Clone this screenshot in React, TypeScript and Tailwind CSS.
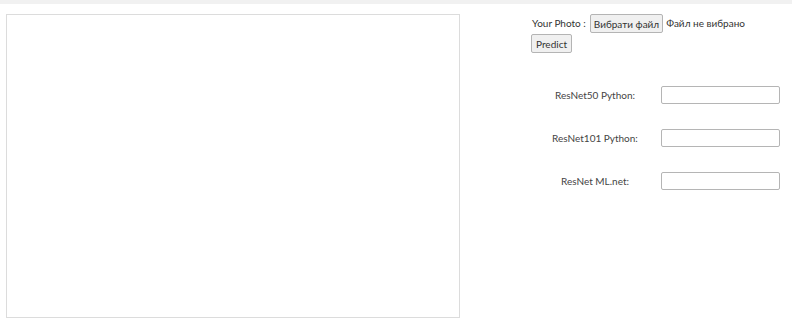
import React from 'react';

const App: React.FC = () => {
  const rows = ['ResNet50 Python:', 'ResNet101 Python:', 'ResNet ML.net:'];

  return (
    <div className="w-[800px] h-[321px] bg-white overflow-hidden" style={{ fontFamily: 'Lato, "Noto Sans", sans-serif' }}>
      <div className="h-[4px] w-[792px] bg-[#f1f1f1]"></div>
      <div className="flex pl-[6px] pt-[10px]">
        {/* image preview */}
        <div className="w-[454px] h-[304px] border border-[#dcdcdc] bg-white"></div>

        {/* form */}
        <div className="ml-[71px] flex flex-col text-[10px] text-[#333]">
          <div className="flex items-center h-[19px]">
            <span className="ml-[1px] mr-[4px]">Your Photo :</span>
            <button className="h-[19px] px-[3px] bg-[#f0f0f0] border border-[#b4b4b4] rounded-[2px] text-[10px] font-normal leading-none text-[#333]">
              Вибрати файл
            </button>
            <span className="ml-[3px]">Файл не вибрано</span>
          </div>
          <div className="mt-[1px]">
            <button className="h-[19px] px-[4px] bg-[#f0f0f0] border border-[#b4b4b4] rounded-[2px] text-[10px] font-normal leading-none text-[#333]">
              Predict
            </button>
          </div>

          <div className="mt-[33px] flex flex-col gap-[25px]">
            {rows.map((r) => (
              <div key={r} className="flex items-center">
                <span className="w-[128px] text-center text-[#444]">{r}</span>
                <input className="ml-[2px] w-[119px] h-[18px] border border-[#b5b5b5] rounded-[2px] bg-white" />
              </div>
            ))}
          </div>
        </div>
      </div>
    </div>
  );
};

export default App;
